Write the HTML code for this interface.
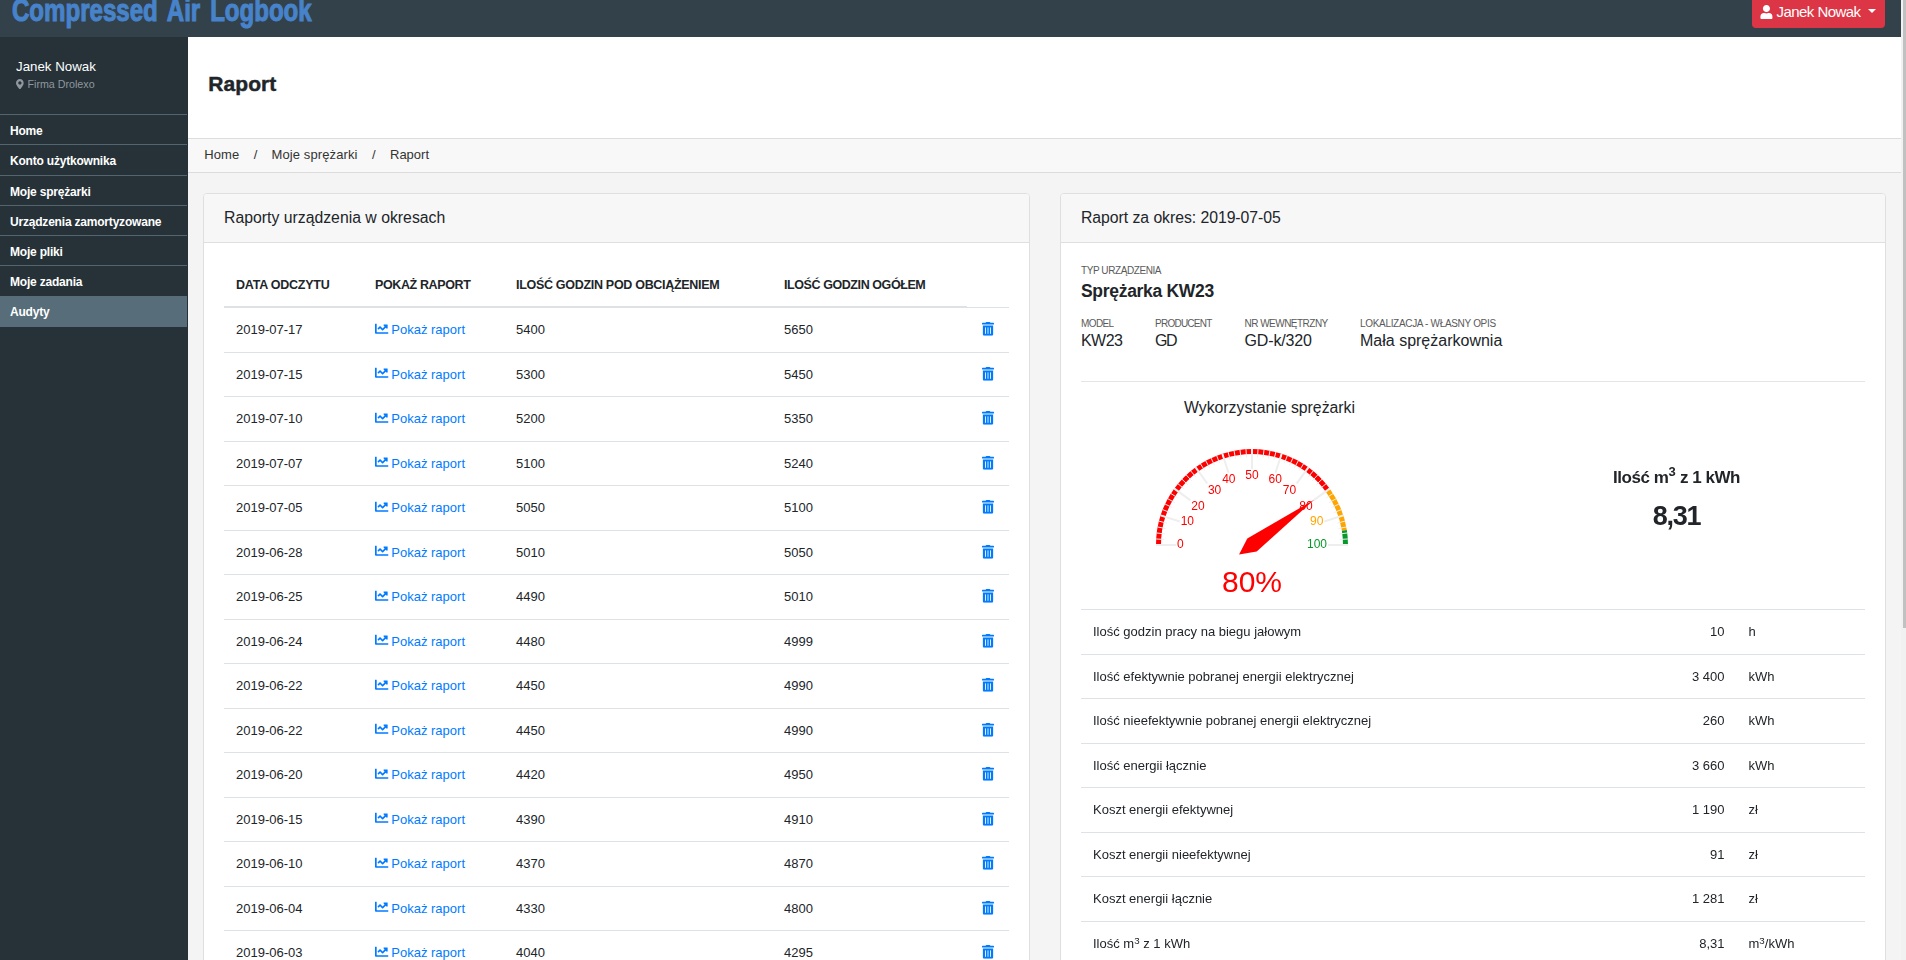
<!DOCTYPE html>
<html lang="pl">
<head>
<meta charset="utf-8">
<title>Raport</title>
<style>
*{box-sizing:border-box;margin:0;padding:0}
html,body{width:1906px;height:960px;overflow:hidden;background:#f4f4f4;font-family:"Liberation Sans",sans-serif;font-size:13px;color:#212529;line-height:1.5}
.abs{position:absolute}
#top{position:absolute;left:0;top:0;width:1901px;height:37px;background:#33414a;overflow:hidden}
#brand{position:absolute;left:11.5px;top:-9px;font-weight:bold;font-size:31px;line-height:40px;color:#4783cb;-webkit-text-stroke:1.1px #4783cb;white-space:nowrap;word-spacing:4.2px;transform-origin:0 0;transform:scaleX(.776)}
#userbtn{position:absolute;left:1752px;top:-6px;width:133px;height:34px;background:#dc3545;border-radius:4px;color:#fff;font-size:15px;line-height:20px;white-space:nowrap;letter-spacing:-.55px}
#userbtn svg{position:absolute;left:8.3px;top:10.9px;width:12.9px;height:14.2px;fill:#fff}
#userbtn i{position:absolute;left:116px;top:15px;width:0;height:0;border-left:4px solid transparent;border-right:4px solid transparent;border-top:4px solid #fff}
#side{position:absolute;left:0;top:37px;width:188px;height:923px;background:#263238}
#side .nm{position:absolute;left:16px;top:21px;font-size:13.3px;line-height:18px;color:#fff;white-space:nowrap}
#side .firm{position:absolute;left:27.5px;top:39px;font-size:10.7px;line-height:16px;color:#8f989e;white-space:nowrap}
#menu{position:absolute;left:0;top:77px;width:187px;list-style:none}
#menu li{height:30.25px;border-top:1px solid #53666f;padding-left:10px;padding-top:1px;font-weight:bold;font-size:12px;line-height:30px;color:#fff;white-space:nowrap;letter-spacing:-.2px}
#menu li.act{background:#576d79;border-top-color:#576d79;height:31px;padding-top:0}
#main{position:absolute;left:188px;top:37px;width:1713px;height:923px;background:#f4f4f4;overflow:hidden}
#ph{position:absolute;left:0;top:0;width:1713px;height:101px;background:#fff}
#ph h1{position:absolute;left:20.2px;top:31.6px;font-size:21px;line-height:30px;font-weight:bold;color:#212529;-webkit-text-stroke:.45px #212529;white-space:nowrap;letter-spacing:.1px}
#bc{position:absolute;left:0;top:101px;width:1713px;height:35px;background:#f8f8f8;border-top:1px solid #dcdcdc;border-bottom:1px solid #dcdcdc;font-size:13px;line-height:32px;color:#333;white-space:nowrap}
#bc span{position:absolute;top:0}
.card{position:absolute;top:156px;width:827px;height:900px;background:#fff;border:1px solid #dfdfdf;border-radius:4px}
.card .hd{position:absolute;left:0;top:0;right:0;height:49px;background:#f7f7f7;border-bottom:1px solid #dfdfdf;border-radius:3px 3px 0 0;padding-left:20px;font-size:15.8px;line-height:47px;color:#212529;white-space:nowrap}
#t1{position:absolute;left:20px;top:68.5px;width:785px;border-collapse:collapse;table-layout:fixed}
#t1 th,#t1 td{padding:12px;text-align:left;vertical-align:top;font-size:13px;line-height:19.5px;white-space:nowrap;border-top:1px solid #dee2e6}
#t1 th{font-weight:bold;font-size:12.5px;letter-spacing:-.32px;border-top:0;padding-top:13px;padding-bottom:11px;border-bottom:2px solid #dee2e6}
#t1 td.nb{border:0}
#t1 td.lk{color:#007bff}
.ic1{width:13.5px;height:13.5px;fill:#007bff;vertical-align:-1.4px;margin-right:2.8px}
.ic2{width:12px;height:13.7px;fill:#007bff;vertical-align:-2px}
#t1 td.tr{padding-left:15px;padding-right:0}
#c2 .lb{position:absolute;font-size:10px;line-height:12px;color:#5a5a5a;white-space:nowrap;letter-spacing:-.42px}
#c2 .dn{position:absolute;left:20px;top:85px;font-weight:bold;font-size:17.5px;line-height:24px;white-space:nowrap;letter-spacing:-.3px}
#c2 .vl{position:absolute;top:135px;font-size:16px;line-height:24px;white-space:nowrap}
#c2 .hr{position:absolute;left:20px;top:187px;width:784px;height:1px;background:#e5e5e5}
#c2 .gt{position:absolute;left:5px;top:202px;width:407px;text-align:center;font-size:15.8px;line-height:24px;white-space:nowrap}
#gauge{position:absolute;left:0;top:0;overflow:visible;will-change:transform}
#c2 .k1{position:absolute;left:412px;top:272px;width:407px;text-align:center;font-weight:bold;font-size:17px;line-height:24px;white-space:nowrap;letter-spacing:-.45px}
#c2 .k1 sup{font-size:13px;line-height:0;vertical-align:7.5px;letter-spacing:0}
#c2 .k2{position:absolute;left:412px;top:302px;width:407px;text-align:center;font-weight:bold;font-size:27px;line-height:40px;white-space:nowrap;letter-spacing:-1.3px}
#t2{position:absolute;left:20px;top:415px;width:784px;border-collapse:collapse;table-layout:fixed}
#t2 td{padding:12px;text-align:left;vertical-align:top;font-size:13px;line-height:19.5px;white-space:nowrap;border-top:1px solid #dee2e6}
#t2 td.r{text-align:right}
#t2 sup{font-size:9.75px;line-height:0;vertical-align:4px}
#sb{position:absolute;left:1901px;top:0;width:5px;height:960px;background:#f1f1f1}
#sb i{position:absolute;left:2px;top:0;width:3px;height:628px;background:#c1c1c1}
</style>
</head>
<body>
<svg width="0" height="0" style="position:absolute"><defs>
<symbol id="i-chart" viewBox="0 0 512 512"><path d="M496 384H64V80c0-8.84-7.16-16-16-16H16C7.16 64 0 71.16 0 80v336c0 17.67 14.33 32 32 32h464c8.84 0 16-7.16 16-16v-32c0-8.84-7.16-16-16-16zM464 96H345.94c-21.38 0-32.09 25.85-16.97 40.97l32.4 32.4L288 242.75l-73.37-73.37c-12.5-12.5-32.76-12.5-45.25 0l-68.69 68.69c-6.25 6.25-6.25 16.38 0 22.63l22.62 22.62c6.25 6.25 16.38 6.25 22.63 0L192 237.25l73.37 73.37c12.5 12.5 32.76 12.5 45.25 0l96-96 32.4 32.4c15.12 15.12 40.97 4.41 40.97-16.97V112c0-8.84-7.16-16-16-16z"/></symbol>
<symbol id="i-trash" viewBox="0 0 448 512"><path d="M32 464a48 48 0 0 0 48 48h288a48 48 0 0 0 48-48V128H32zm272-256a16 16 0 0 1 32 0v224a16 16 0 0 1-32 0zm-96 0a16 16 0 0 1 32 0v224a16 16 0 0 1-32 0zm-96 0a16 16 0 0 1 32 0v224a16 16 0 0 1-32 0zM432 32H312l-9.4-18.7A24 24 0 0 0 281.1 0H166.8a23.72 23.72 0 0 0-21.4 13.3L136 32H16A16 16 0 0 0 0 48v32a16 16 0 0 0 16 16h416a16 16 0 0 0 16-16V48a16 16 0 0 0-16-16z"/></symbol>
<symbol id="i-user" viewBox="0 0 448 512"><path d="M224 256c70.7 0 128-57.3 128-128S294.7 0 224 0 96 57.3 96 128s57.3 128 128 128zm89.6 32h-16.7c-22.2 10.2-46.9 16-72.9 16s-50.6-5.8-72.9-16h-16.7C60.2 288 0 348.2 0 422.4V464c0 26.5 21.5 48 48 48h352c26.5 0 48-21.5 48-48v-41.6c0-74.2-60.2-134.4-134.4-134.4z"/></symbol>
<symbol id="i-pin" viewBox="0 0 384 512"><path d="M172.268 501.67C26.97 291.031 0 269.413 0 192 0 85.961 85.961 0 192 0s192 85.961 192 192c0 77.413-26.97 99.031-172.268 309.67-9.535 13.774-29.93 13.773-39.464 0zM192 272c44.183 0 80-35.817 80-80s-35.817-80-80-80-80 35.817-80 80 35.817 80 80 80z"/></symbol>
</defs></svg>
<div id="top">
  <div id="brand">Compressed Air Logbook</div>
  <div id="userbtn"><svg viewBox="0 0 448 512"><use href="#i-user"/></svg><span class="abs" style="left:24.5px;top:8px">Janek Nowak</span><i></i></div>
</div>
<div id="side">
  <div class="nm">Janek Nowak</div>
  <svg class="abs" style="left:16.1px;top:41.8px;width:7.8px;height:10.4px;fill:#8f989e" viewBox="0 0 384 512"><use href="#i-pin"/></svg><div class="firm">Firma Drolexo</div>
  <ul id="menu">
    <li>Home</li><li>Konto użytkownika</li><li>Moje sprężarki</li><li>Urządzenia zamortyzowane</li><li>Moje pliki</li><li>Moje zadania</li><li class="act">Audyty</li>
  </ul>
</div>
<div id="main">
  <div id="ph"><h1>Raport</h1></div>
  <div id="bc"><span style="left:16.3px;letter-spacing:.1px">Home</span><span style="left:65.8px">/</span><span style="left:83.5px;letter-spacing:.11px">Moje sprężarki</span><span style="left:184px">/</span><span style="left:202px">Raport</span></div>
  <div class="card" id="c1" style="left:15px"><div class="hd">Raporty urządzenia w okresach</div>
<table id="t1"><colgroup><col style="width:139px"><col style="width:141px"><col style="width:268px"><col style="width:195px"><col style="width:42px"></colgroup>
<thead><tr><th style="letter-spacing:-.23px">DATA ODCZYTU</th><th style="letter-spacing:-.38px">POKAŻ RAPORT</th><th style="letter-spacing:-.3px">ILOŚĆ GODZIN POD OBCIĄŻENIEM</th><th style="letter-spacing:-.42px">ILOŚĆ GODZIN OGÓŁEM</th><td class="nb"></td></tr></thead><tbody>
<tr><td>2019-07-17</td><td class="lk"><svg class="ic1" viewBox="0 0 512 512"><use href="#i-chart"/></svg>Pokaż raport</td><td>5400</td><td>5650</td><td class="tr"><svg class="ic2" viewBox="0 0 448 512"><use href="#i-trash"/></svg></td></tr>
<tr><td>2019-07-15</td><td class="lk"><svg class="ic1" viewBox="0 0 512 512"><use href="#i-chart"/></svg>Pokaż raport</td><td>5300</td><td>5450</td><td class="tr"><svg class="ic2" viewBox="0 0 448 512"><use href="#i-trash"/></svg></td></tr>
<tr><td>2019-07-10</td><td class="lk"><svg class="ic1" viewBox="0 0 512 512"><use href="#i-chart"/></svg>Pokaż raport</td><td>5200</td><td>5350</td><td class="tr"><svg class="ic2" viewBox="0 0 448 512"><use href="#i-trash"/></svg></td></tr>
<tr><td>2019-07-07</td><td class="lk"><svg class="ic1" viewBox="0 0 512 512"><use href="#i-chart"/></svg>Pokaż raport</td><td>5100</td><td>5240</td><td class="tr"><svg class="ic2" viewBox="0 0 448 512"><use href="#i-trash"/></svg></td></tr>
<tr><td>2019-07-05</td><td class="lk"><svg class="ic1" viewBox="0 0 512 512"><use href="#i-chart"/></svg>Pokaż raport</td><td>5050</td><td>5100</td><td class="tr"><svg class="ic2" viewBox="0 0 448 512"><use href="#i-trash"/></svg></td></tr>
<tr><td>2019-06-28</td><td class="lk"><svg class="ic1" viewBox="0 0 512 512"><use href="#i-chart"/></svg>Pokaż raport</td><td>5010</td><td>5050</td><td class="tr"><svg class="ic2" viewBox="0 0 448 512"><use href="#i-trash"/></svg></td></tr>
<tr><td>2019-06-25</td><td class="lk"><svg class="ic1" viewBox="0 0 512 512"><use href="#i-chart"/></svg>Pokaż raport</td><td>4490</td><td>5010</td><td class="tr"><svg class="ic2" viewBox="0 0 448 512"><use href="#i-trash"/></svg></td></tr>
<tr><td>2019-06-24</td><td class="lk"><svg class="ic1" viewBox="0 0 512 512"><use href="#i-chart"/></svg>Pokaż raport</td><td>4480</td><td>4999</td><td class="tr"><svg class="ic2" viewBox="0 0 448 512"><use href="#i-trash"/></svg></td></tr>
<tr><td>2019-06-22</td><td class="lk"><svg class="ic1" viewBox="0 0 512 512"><use href="#i-chart"/></svg>Pokaż raport</td><td>4450</td><td>4990</td><td class="tr"><svg class="ic2" viewBox="0 0 448 512"><use href="#i-trash"/></svg></td></tr>
<tr><td>2019-06-22</td><td class="lk"><svg class="ic1" viewBox="0 0 512 512"><use href="#i-chart"/></svg>Pokaż raport</td><td>4450</td><td>4990</td><td class="tr"><svg class="ic2" viewBox="0 0 448 512"><use href="#i-trash"/></svg></td></tr>
<tr><td>2019-06-20</td><td class="lk"><svg class="ic1" viewBox="0 0 512 512"><use href="#i-chart"/></svg>Pokaż raport</td><td>4420</td><td>4950</td><td class="tr"><svg class="ic2" viewBox="0 0 448 512"><use href="#i-trash"/></svg></td></tr>
<tr><td>2019-06-15</td><td class="lk"><svg class="ic1" viewBox="0 0 512 512"><use href="#i-chart"/></svg>Pokaż raport</td><td>4390</td><td>4910</td><td class="tr"><svg class="ic2" viewBox="0 0 448 512"><use href="#i-trash"/></svg></td></tr>
<tr><td>2019-06-10</td><td class="lk"><svg class="ic1" viewBox="0 0 512 512"><use href="#i-chart"/></svg>Pokaż raport</td><td>4370</td><td>4870</td><td class="tr"><svg class="ic2" viewBox="0 0 448 512"><use href="#i-trash"/></svg></td></tr>
<tr><td>2019-06-04</td><td class="lk"><svg class="ic1" viewBox="0 0 512 512"><use href="#i-chart"/></svg>Pokaż raport</td><td>4330</td><td>4800</td><td class="tr"><svg class="ic2" viewBox="0 0 448 512"><use href="#i-trash"/></svg></td></tr>
<tr><td>2019-06-03</td><td class="lk"><svg class="ic1" viewBox="0 0 512 512"><use href="#i-chart"/></svg>Pokaż raport</td><td>4040</td><td>4295</td><td class="tr"><svg class="ic2" viewBox="0 0 448 512"><use href="#i-trash"/></svg></td></tr>
</tbody></table>
</div>
  <div class="card" id="c2" style="left:872px;width:826px"><div class="hd" style="letter-spacing:-.05px">Raport za okres: 2019-07-05</div>
<div class="lb" style="left:20px;top:71px">TYP URZĄDZENIA</div>
<div class="dn">Sprężarka KW23</div>
<div class="lb" style="left:20px;top:124px;letter-spacing:-.6px">MODEL</div><div class="vl" style="left:20px;letter-spacing:-.55px">KW23</div>
<div class="lb" style="left:94px;top:124px;letter-spacing:-.75px">PRODUCENT</div><div class="vl" style="left:94px;letter-spacing:-1.5px">GD</div>
<div class="lb" style="left:183.5px;top:124px;letter-spacing:-.52px">NR WEWNĘTRZNY</div><div class="vl" style="left:183.5px;letter-spacing:-.15px">GD-k/320</div>
<div class="lb" style="left:299px;top:124px;letter-spacing:-.32px">LOKALIZACJA - WŁASNY OPIS</div><div class="vl" style="left:299px">Mała sprężarkownia</div>
<div class="hr"></div>
<div class="gt">Wykorzystanie sprężarki</div>
<svg id="gauge" width="420" height="440" viewBox="0 0 420 440"><path d="M97.5 351A93.5 93.5 0 0 1 266.64 296.04" stroke="#ff0000" stroke-width="5" fill="none"/><path d="M266.64 296.04A93.5 93.5 0 0 1 283.35 336.37" stroke="#ffa500" stroke-width="5" fill="none"/><path d="M283.35 336.37A93.5 93.5 0 0 1 284.5 351" stroke="#07982a" stroke-width="5" fill="none"/><path d="M95 351L115 351M99.7 321.33L118.72 327.51M113.33 294.57L129.51 306.33M134.57 273.33L146.33 289.51M161.33 259.7L167.51 278.72M191 255L191 275M220.67 259.7L214.49 278.72M247.43 273.33L235.67 289.51M268.67 294.57L252.49 306.33M282.3 321.33L263.28 327.51M287 351L267 351" stroke="#eee" stroke-width="2" fill="none"/><path d="M95 351L103 351M95.19 344.97L103.17 345.47M95.76 338.97L103.69 339.97M96.7 333.01L104.56 334.51M98.02 327.13L105.76 329.12M99.7 321.33L107.31 323.81M99.7 321.33L107.31 323.81M101.74 315.66L109.18 318.61M104.14 310.13L111.38 313.53M106.87 304.75L113.89 308.61M109.94 299.56L116.7 303.85M113.33 294.57L119.81 299.27M113.33 294.57L119.81 299.27M117.03 289.81L123.19 294.91M121.02 285.28L126.85 290.76M125.28 281.02L130.76 286.85M129.81 277.03L134.91 283.19M134.57 273.33L139.27 279.81M134.57 273.33L139.27 279.81M139.56 269.94L143.85 276.7M144.75 266.87L148.61 273.89M150.13 264.14L153.53 271.38M155.66 261.74L158.61 269.18M161.33 259.7L163.81 267.31M161.33 259.7L163.81 267.31M167.13 258.02L169.12 265.76M173.01 256.7L174.51 264.56M178.97 255.76L179.97 263.69M184.97 255.19L185.47 263.17M191 255L191 263M191 255L191 263M197.03 255.19L196.53 263.17M203.03 255.76L202.03 263.69M208.99 256.7L207.49 264.56M214.87 258.02L212.88 265.76M220.67 259.7L218.19 267.31M220.67 259.7L218.19 267.31M226.34 261.74L223.39 269.18M231.87 264.14L228.47 271.38M237.25 266.87L233.39 273.89M242.44 269.94L238.15 276.7M247.43 273.33L242.73 279.81M247.43 273.33L242.73 279.81M252.19 277.03L247.09 283.19M256.72 281.02L251.24 286.85M260.98 285.28L255.15 290.76M264.97 289.81L258.81 294.91M268.67 294.57L262.19 299.27M268.67 294.57L262.19 299.27M272.06 299.56L265.3 303.85M275.13 304.75L268.11 308.61M277.86 310.13L270.62 313.53M280.26 315.66L272.82 318.61M282.3 321.33L274.69 323.81M282.3 321.33L274.69 323.81M283.98 327.13L276.24 329.12M285.3 333.01L277.44 334.51M286.24 338.97L278.31 339.97M286.81 344.97L278.83 345.47M287 351L279 351" stroke="#eee" stroke-width="1" fill="none"/><g font-family="Liberation Sans, sans-serif" font-size="12"><text x="116" y="354" text-anchor="start" fill="#ff0000">0</text><text x="119.67" y="331" text-anchor="start" fill="#ff0000">10</text><text x="130.32" y="316" text-anchor="start" fill="#ff0000">20</text><text x="146.92" y="300" text-anchor="start" fill="#ff0000">30</text><text x="167.82" y="289" text-anchor="middle" fill="#ff0000">40</text><text x="191" y="285" text-anchor="middle" fill="#ff0000">50</text><text x="214.18" y="289" text-anchor="middle" fill="#ff0000">60</text><text x="235.08" y="300" text-anchor="end" fill="#ff0000">70</text><text x="251.68" y="316" text-anchor="end" fill="#ff0000">80</text><text x="262.33" y="331" text-anchor="end" fill="#ffa500">90</text><text x="266" y="354" text-anchor="end" fill="#07982a">100</text></g><path d="M178.06 360.4L186.3 344.53L253.13 305.86L195.7 357.47Z" fill="#ff0000"/><text x="191" y="398" text-anchor="middle" font-family="Liberation Sans, sans-serif" font-size="30" fill="#ff0000">80%</text></svg>
<div class="k1">Ilość m<sup>3</sup> z 1 kWh</div>
<div class="k2">8,31</div>
<table id="t2"><colgroup><col style="width:529px"><col style="width:126.5px"><col style="width:128.5px"></colgroup><tbody>
<tr><td>Ilość godzin pracy na biegu jałowym</td><td class="r">10</td><td>h</td></tr>
<tr><td>Ilość efektywnie pobranej energii elektrycznej</td><td class="r">3 400</td><td>kWh</td></tr>
<tr><td>Ilość nieefektywnie pobranej energii elektrycznej</td><td class="r">260</td><td>kWh</td></tr>
<tr><td>Ilość energii łącznie</td><td class="r">3 660</td><td>kWh</td></tr>
<tr><td>Koszt energii efektywnej</td><td class="r">1 190</td><td>zł</td></tr>
<tr><td>Koszt energii nieefektywnej</td><td class="r">91</td><td>zł</td></tr>
<tr><td>Koszt energii łącznie</td><td class="r">1 281</td><td>zł</td></tr>
<tr><td>Ilość m<sup>3</sup> z 1 kWh</td><td class="r">8,31</td><td>m<sup>3</sup>/kWh</td></tr>
</tbody></table>
</div>
</div>
<div id="sb"><i></i></div>
</body>
</html>
